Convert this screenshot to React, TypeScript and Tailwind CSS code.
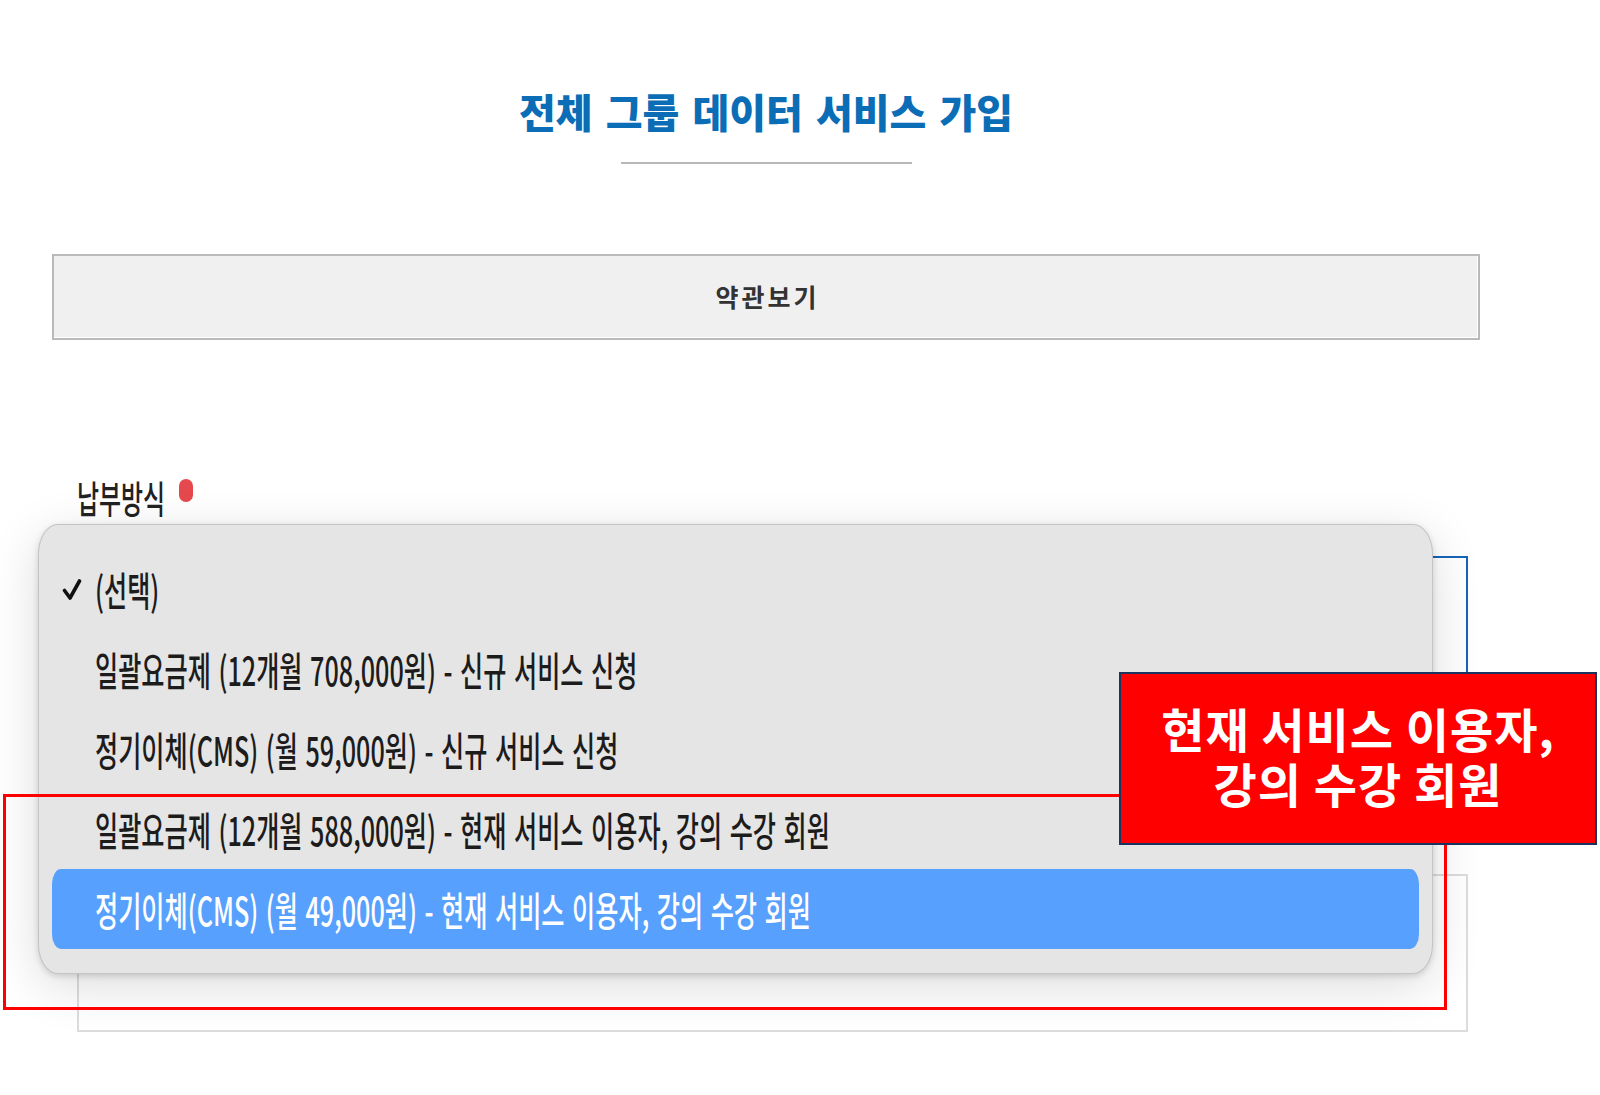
const OPTIONS = [
  "(선택)",
  "일괄요금제 (12개월 708,000원) - 신규 서비스 신청",
  "정기이체(CMS) (월 59,000원) - 신규 서비스 신청",
  "일괄요금제 (12개월 588,000원) - 현재 서비스 이용자, 강의 수강 회원",
  "정기이체(CMS) (월 49,000원) - 현재 서비스 이용자, 강의 수강 회원",
];

function CheckMark() {
  return (
    <svg width="20" height="21" viewBox="0 0 20 21" className="ml-[10px]">
      <path d="M2.5 11.5 L8 19 L17.5 2" fill="none" stroke="#111" strokeWidth="3.6" strokeLinecap="round" strokeLinejoin="round" />
    </svg>
  );
}

function OptionMenu() {
  return (
    <div className="absolute left-[38px] top-[524px] h-[450px] w-[1395px] rounded-[20px/30px] border border-[#c4c4c4] bg-[#e5e5e5] px-[13px] pt-[24px] shadow-[0_2px_6px_rgba(0,0,0,0.15),0_12px_50px_rgba(0,0,0,0.14)]">
      {OPTIONS.map((label, i) => {
        const selected = i === OPTIONS.length - 1;
        return (
          <div
            key={label}
            className={
              selected
                ? "flex h-[80px] items-center rounded-[9px/15px] bg-[#58a0fd] text-white"
                : "flex h-[80px] items-center text-[#1c1c1c]"
            }
          >
            <div className="w-[43px]">{i === 0 && <CheckMark />}</div>
            <span className="inline-block origin-left scale-x-[0.63] whitespace-nowrap text-[40px] leading-[80px] font-medium [word-spacing:3px]">
              {label}
            </span>
          </div>
        );
      })}
    </div>
  );
}

export default function App() {
  return (
    <div className="relative h-[1095px] w-full overflow-hidden bg-white font-['Noto_Sans_CJK_KR',sans-serif]">
      <div className="ml-[52px] w-[1428px] pt-[88px]">
        <h1 className="text-center text-[40px] leading-[46px] font-black text-[#0b6db6] [word-spacing:4px]">
          전체 그룹 데이터 서비스 가입
        </h1>
        <div className="mx-auto mt-[28px] h-[2px] w-[291px] bg-[#b8b8b8]"></div>

        <button className="mt-[90px] flex h-[86px] w-full items-center justify-center border-2 border-[#bababa] bg-[#f0f0f0] pl-[3px] text-[25px] font-bold tracking-[3px] text-[#333] shadow-[inset_-1px_-1px_0_#fff]">
          약관보기
        </button>

        <div className="ml-[25px] mt-[137px] w-[1391px]">
          <div className="flex h-[40px] items-start">
            <div className="w-[102px] whitespace-nowrap">
              <span className="inline-block origin-left scale-x-[0.63] text-[38px] leading-[40px] font-medium text-[#222]">
                납부방식
              </span>
            </div>
            <span className="mt-[2px] h-[23px] w-[14px] rounded-full bg-[#e5484d]"></span>
          </div>
          <div className="mt-[39px] h-[150px] border-2 border-[#1565b8] bg-white"></div>
          <div className="mt-[168px] h-[158px] border-2 border-[#dcdcdc] bg-white"></div>
        </div>
      </div>

      <OptionMenu />

      <div className="absolute left-[3px] top-[794px] h-[216px] w-[1444px] border-[3px] border-[#ff0000]"></div>

      <div className="absolute left-[1119px] top-[672px] flex h-[173px] w-[478px] flex-col items-center justify-center border-2 border-[#1b3360] bg-[#ff0000] pb-[8px] text-[47px] leading-[55px] font-bold tracking-[1px] text-white">
        <p>현재 서비스 이용자,</p>
        <p>강의 수강 회원</p>
      </div>
    </div>
  );
}
